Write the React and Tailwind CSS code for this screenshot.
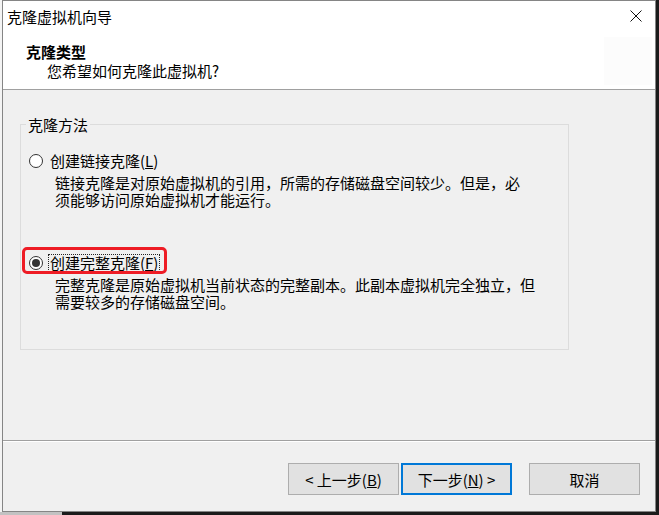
import React from 'react';

const font = "font-['Noto_Sans_CJK_SC','Liberation_Sans',sans-serif]";

const Radio = ({ checked }) => (
  <span className="w-[14px] h-[14px] rounded-full border border-[#333] bg-white flex items-center justify-center shrink-0">
    {checked && <span className="w-[8px] h-[8px] rounded-full bg-[#333]" />}
  </span>
);

const Button = ({ children, primary }) => (
  <button
    className={`w-[111px] h-[32px] bg-[#e1e1e1] text-[15px] leading-none text-black flex items-center justify-center ${
      primary ? 'border-2 border-[#0078d7]' : 'border border-[#adadad]'
    }`}
  >
    {children}
  </button>
);

const App = () => {
  return (
    <div className={`w-[659px] h-[515px] flex flex-col bg-[#1b1b1b] overflow-hidden ${font}`}>
      <div className="flex h-[512px]">
        <div className="w-[2px] bg-[#f4f4f4]" />
        {/* Window */}
        <div className="w-[654px] h-[512px] border border-[#858585] bg-[#f0f0f0] flex flex-col text-black">
          {/* Header */}
          <div className="bg-white border-b border-[#a0a0a0]">
            <div className="h-[30px] flex items-center justify-between pl-[4px] pr-[13px]">
              <span className="text-[15px] leading-none">克隆虚拟机向导</span>
              <svg width="12" height="12" viewBox="0 0 12 12">
                <path d="M0.5 0.5 L11.5 11.5 M11.5 0.5 L0.5 11.5" stroke="#111" strokeWidth="1" />
              </svg>
            </div>
            <div className="h-[58px] flex justify-between">
              <div className="pt-[11px]">
                <div className="pl-[23px] text-[15px] leading-[19px] font-bold">克隆类型</div>
                <div className="pl-[44px] text-[15px] leading-[19px]">您希望如何克隆此虚拟机?</div>
              </div>
              <div className="w-[48px] h-[48px] mt-[6px] mr-[3px] bg-[#fcfcfc]" />
            </div>
          </div>

          {/* Body */}
          <div className="h-[350px] pl-[17px] pt-[26px]">
            <fieldset className="w-[549px] border border-[#dcdcdc] px-[8px] pt-[18px] pb-[39px]">
              <legend className="ml-[-3px] px-[2px] text-[15px] leading-[17px]">克隆方法</legend>

              <div className="h-[20px] flex items-center">
                <Radio />
                <span className="ml-[5px] px-[1px] border border-transparent text-[15px] leading-[16px]">
                  创建链接克隆(<span className="underline">L</span>)
                </span>
              </div>
              <p className="ml-[26px] mt-[3px] text-[15px] leading-[17px]">
                链接克隆是对原始虚拟机的引用，所需的存储磁盘空间较少。但是，必
                <br />
                须能够访问原始虚拟机才能运行。
              </p>

              <div className="relative h-[20px] mt-[45px] flex items-center">
                <Radio checked />
                <span className="ml-[5px] px-[1px] border border-dotted border-[#222] text-[15px] leading-[16px]">
                  创建完整克隆(<span className="underline">F</span>)
                </span>
                <div className="absolute left-[-7px] top-[-6px] w-[145px] h-[27px] border-[3px] border-[#ee1c25] rounded-[5px]" />
              </div>
              <p className="ml-[26px] mt-[3px] text-[15px] leading-[17px]">
                完整克隆是原始虚拟机当前状态的完整副本。此副本虚拟机完全独立，但
                <br />
                需要较多的存储磁盘空间。
              </p>
            </fieldset>
          </div>

          {/* Footer */}
          <div className="border-t border-[#a0a0a0]">
            <div className="border-t border-white flex-1 flex justify-end pt-[21px] pr-[15px]">
              <Button>
                &lt; 上一步(<span className="underline">B</span>)
              </Button>
              <div className="ml-[2px]">
                <Button primary>
                  下一步(<span className="underline">N</span>) &gt;
                </Button>
              </div>
              <div className="ml-[17px]">
                <Button>取消</Button>
              </div>
            </div>
          </div>
        </div>
        <div className="flex-1 bg-[#1b1b1b]" />
      </div>
      <div className="flex h-[3px]">
        <div className="w-[62px] bg-[#c2c2c2]" />
        <div className="flex-1 bg-[#1b1b1b]" />
      </div>
    </div>
  );
};

export default App;
